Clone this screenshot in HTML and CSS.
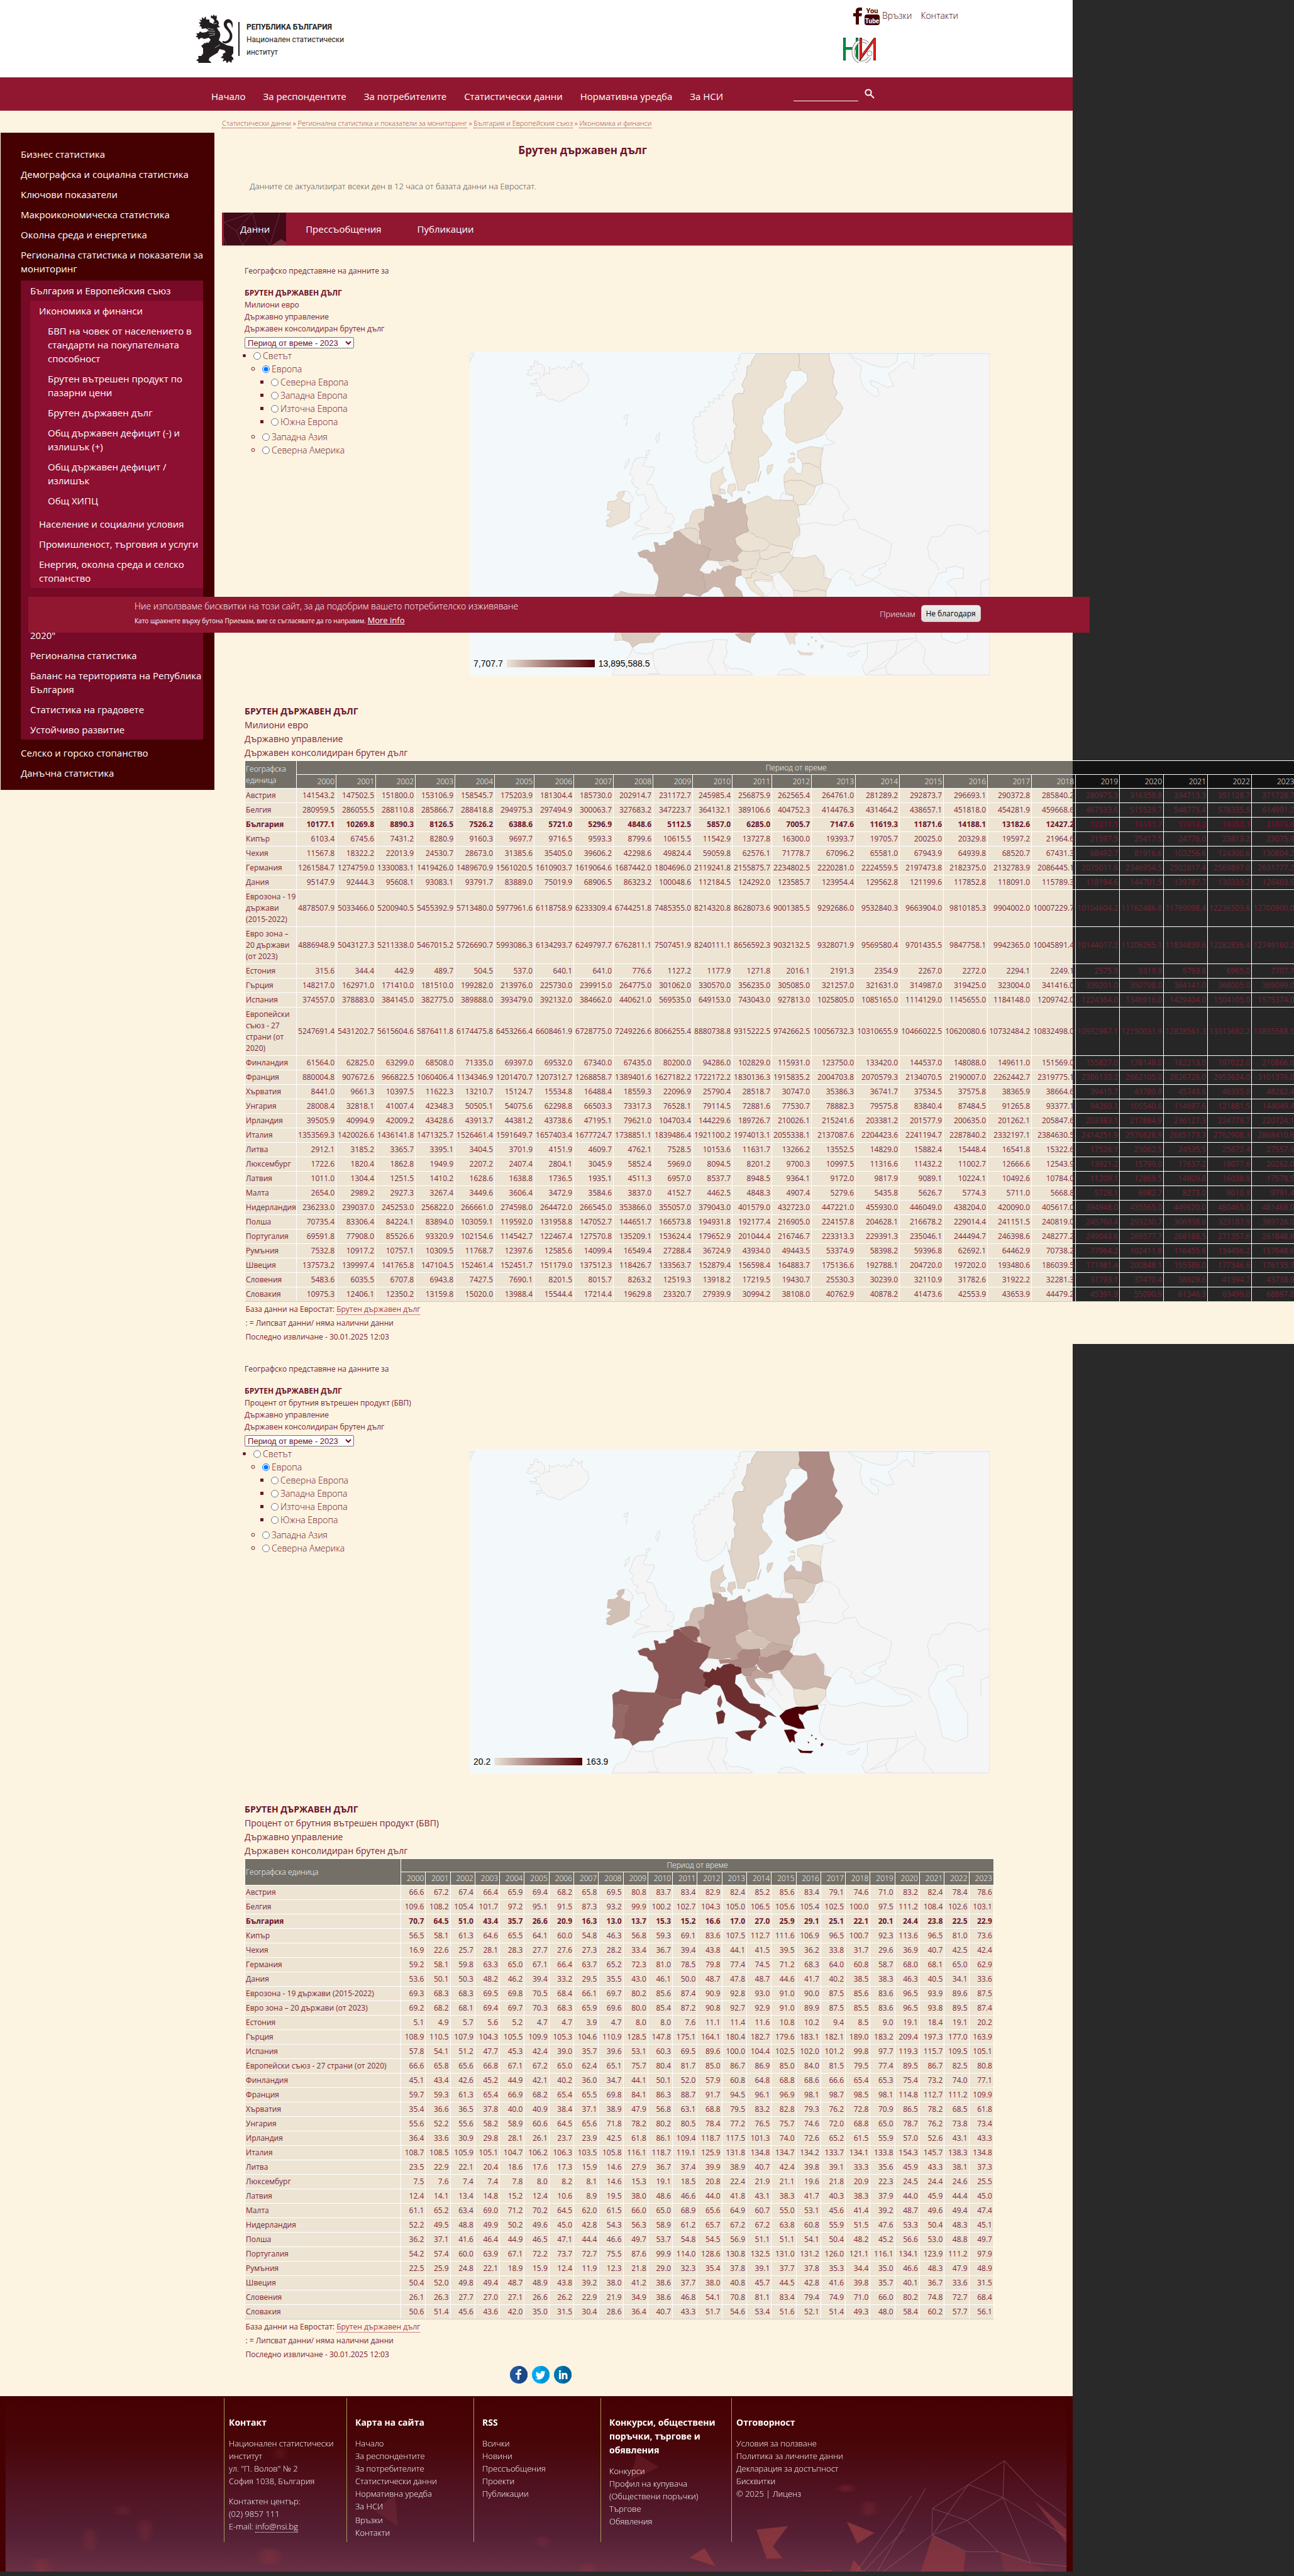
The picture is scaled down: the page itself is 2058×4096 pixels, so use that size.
FILE: index.html
```html
<!DOCTYPE html>
<html lang="bg">
<head>
<meta charset="utf-8">
<title>Брутен държавен дълг | Национален статистически институт</title>
<link rel="stylesheet" href="styles.css">
</head>
<body>
<div class="page">
  <header class="top">
    <a class="brand" href="#">
      <svg class="lion" viewBox="0 0 61 77" aria-hidden="true">
        <path d="M25 5l1-4 2 2 2-3 2 3 2-2 1 4-1 3c4 2 5 6 3 9l3 3-5 1 2 4c3 3 4 6 3 10l-2 6 5 4 8 4 9 2 3 1-1 8-4 6 3 3 2 4-4-1-1 5-4-3-3 4-2-5-5 2 2-5-5-1 4-4-1-2 5-3-2-3-8-2-3 6-7 4-6 4-1 4 4 3-1 4-4-1-2 4-4-4-5 3-1-4-5 1 2-4-4-2 4-3-1-4 5 0 3-4 0-8-3-4 6-5 6 0 3-5-3-3-7 2-5-2-4 3-2-4-3 0 3-3-2-3 4 0 2-3 4 2 6-1 4-3-5-3-6 1-1-4-3 0 2-3-3-3 4-1-3-4 4 1 0-5 3 3 3-4 1 5 5 0 0 4 6 3 2-5-2-3z"/>
        <path d="M44 42c6 3 13-3 11-11-2-6-8-8-9-14-1-6 4-11 9-9 6 2 6 10 4 14 0-5-2-9-5-9-4 0-4 4-1 8 4 5 8 10 6 17-2 7-10 10-15 7z"/>
        <path class="cut" d="M28 12h3M30 15l5-1M20 22l10 2M20 26l12 1M22 30l10 0M23 34l9-2M16 46l8-4M40 48l-8 5"/>
      </svg>
      <span class="rule"></span>
      <span class="brand-text"><strong>РЕПУБЛИКА БЪЛГАРИЯ</strong><span>Национален статистически</span><span>институт</span></span>
    </a>
    <div class="top-right">
      <nav class="top-links" aria-label="Връзки">
        <a href="#" aria-label="Facebook"><svg class="ic-f" viewBox="0 0 14 27" aria-hidden="true"><path d="M4 27V14H0V9h4V6c0-4 2-6 6-6h4v5h-3c-2 0-2 1-2 2v2h5l-1 5H9v13z"/></svg></a>
        <a href="#" aria-label="YouTube"><svg class="ic-yt" viewBox="0 0 24 30" aria-hidden="true"><rect x="0" y="13" width="24" height="17" rx="4"/><text x="12" y="11" text-anchor="middle">You</text><text class="inv" x="12" y="27" text-anchor="middle">Tube</text></svg></a>
        <a href="#">Връзки</a>
        <a class="gap" href="#">Контакти</a>
      </nav>
      <svg class="nsi" viewBox="0 0 52 40" role="img" aria-label="НСИ">
        <g fill="none"><path stroke="#222" stroke-width="4" d="M2 0v36M22 0v34M2 17h20"/><path stroke="#0b8f45" stroke-width="3" d="M2 1v34M22 1v32M2 17h20"/>
        <path stroke="#888" stroke-width="5" d="M39 9a14 17 0 1 0 3 22"/><path stroke="#fff" stroke-width="3" d="M39 9a14 17 0 1 0 3 22"/>
        <path stroke="#222" stroke-width="4" d="M28 0v32L50 2v34"/><path stroke="#e3211c" stroke-width="3" d="M28 1v30L50 3v32"/></g>
        <circle cx="42" cy="25" r="4" fill="#fff" stroke="#888"/>
      </svg>
    </div>
  </header>

  <div class="navbar">
    <nav class="menu" aria-label="Главно меню"><a href="#">Начало</a><a href="#">За респондентите</a><a href="#">За потребителите</a><a href="#">Статистически данни</a><a href="#">Нормативна уредба</a><a href="#">За НСИ</a></nav>
    <form class="search"><input type="text" aria-label="Търсене"><button type="button" aria-label="Търси"><svg viewBox="0 0 16 16" aria-hidden="true"><circle cx="6" cy="6" r="4.6"/><path d="M9.5 9.5L15 15"/></svg></button></form>
  </div>

  <div class="layout">
    <aside class="side">
      <ul>
        <li><a href="#">Бизнес статистика</a></li>
        <li><a href="#">Демографска и социална статистика</a></li>
        <li><a href="#">Ключови показатели</a></li>
        <li><a href="#">Макроикономическа статистика</a></li>
        <li><a href="#">Околна среда и енергетика</a></li>
        <li><a class="two" href="#">Регионална статистика и показатели за<br>мониторинг</a>
          <ul class="l2">
            <li><a href="#">България и Европейския съюз</a>
              <ul class="l3">
                <li><a href="#">Икономика и финанси</a>
                  <ul class="l4">
                    <li><a href="#">БВП на човек от населението в стандарти на покупателната способност</a></li>
                    <li><a href="#">Брутен вътрешен продукт по пазарни цени</a></li>
                    <li><a href="#">Брутен държавен дълг</a></li>
                    <li><a href="#">Общ държавен дефицит (-) и излишък (+)</a></li>
                    <li><a href="#">Общ държавен дефицит / излишък</a></li>
                    <li><a href="#">Общ ХИПЦ</a></li>
                  </ul></li>
                <li><a href="#">Население и социални условия</a></li>
                <li><a class="two" href="#">Промишленост, търговия и услуги</a></li>
                <li><a href="#">Енергия, околна среда и селско стопанство</a></li>
              </ul></li>
            <li><a href="#">Структурни бази данни</a></li>
            <li><a href="#">Показатели на стратегия „Европа<br>2020"</a></li>
            <li><a href="#">Регионална статистика</a></li>
            <li><a class="two" href="#">Баланс на територията на Република<br>България</a></li>
            <li><a href="#">Статистика на градовете</a></li>
            <li><a href="#">Устойчиво развитие</a></li>
          </ul></li>
        <li><a href="#">Селско и горско стопанство</a></li>
        <li><a href="#">Данъчна статистика</a></li>
      </ul>
    </aside>

    <main class="main">
      <div class="crumbs"><a href="#">Статистически данни</a> » <a href="#">Регионална статистика и показатели за мониторинг</a> » <a href="#">България и Европейския съюз</a> » <a href="#">Икономика и финанси</a></div>
      <h1>Брутен държавен дълг</h1>
      <p class="note">Данните се актуализират всеки ден в 12 часа от базата данни на Евростат.</p>
      <nav class="tabs" aria-label="Раздели"><a class="on" href="#"><svg viewBox="0 0 100 53" preserveAspectRatio="none" aria-hidden="true"><path class="tri" d="M76 53l16-10 8 5v5z"/><path d="M0 16l46-16M46 0l6 22 22 31M90 0L74 53M46 0L20 30 30 53M0 16l20 14M52 22L30 53M0 40l4 13"/></svg><span>Данни</span></a><a href="#">Прессъобщения</a><a href="#">Публикации</a></nav>

      <section class="stat" data-set="eur" data-unit="Милиони евро"></section>
      <section class="stat" data-set="gdp" data-unit="Процент от брутния вътрешен продукт (БВП)"></section>

      <div class="share">
        <a href="#" aria-label="Facebook"><svg viewBox="0 0 28 28" aria-hidden="true"><circle cx="14" cy="14" r="14" fill="#22559d"/><path d="M14 0a14 14 0 0 1 0 28z" fill="#1c4684"/><path fill="#fff" d="M12 22v-8H9v-3h3V9c0-3 2-4 4-4h2v3h-1c-1 0-2 0-2 2v1h3v3h-3v8z"/></svg></a>
        <a href="#" aria-label="Twitter"><svg viewBox="0 0 28 28" aria-hidden="true"><circle cx="14" cy="14" r="14" fill="#00aaf0"/><path d="M14 0a14 14 0 0 1 0 28z" fill="#0095d8"/><path fill="#fff" d="M22 9l-2 1 1-2-2 1c-2-2-6-1-5 3-3 0-5-1-7-3-1 2 0 4 1 5l-2-1c0 2 1 3 3 4H7c1 1 2 2 3 2-1 1-3 1-4 1 6 4 14 0 14-9z"/></svg></a>
        <a href="#" aria-label="LinkedIn"><svg viewBox="0 0 28 28" aria-hidden="true"><circle cx="14" cy="14" r="14" fill="#0076ae"/><path d="M14 0a14 14 0 0 1 0 28z" fill="#006397"/><path fill="#fff" d="M8 11h3v10H8zM8 7h3v3H8zM12.500 11h3v1c2-2 6-1 6 3v6h-3v-5c0-3-3-3-3 0v5h-3z"/></svg></a>
      </div>
    </main>
  </div>

  <footer class="foot">
    <svg class="art" viewBox="0 159 1553 954" preserveAspectRatio="none" aria-hidden="true">
      <g class="blur"><ellipse cx="390" cy="1030" rx="14" ry="45"/><ellipse cx="60" cy="1090" rx="10" ry="50"/><ellipse cx="178" cy="780" rx="6" ry="28"/><ellipse cx="210" cy="890" rx="7" ry="60"/><ellipse cx="785" cy="950" rx="7" ry="28"/><ellipse cx="130" cy="940" rx="7" ry="60"/><ellipse cx="405" cy="470" rx="5" ry="30"/><ellipse cx="1258" cy="770" rx="8" ry="40"/><ellipse cx="850" cy="1100" rx="8" ry="30"/><ellipse cx="1225" cy="660" rx="10" ry="20"/></g>
      <g class="shard"><path d="M922 470l32 75-42 72z" opacity=".35"/><path d="M572 690l4 178-34-85z" opacity=".35"/><path d="M1095 885l46-20-22 110 14 65-23 4z"/><path d="M1226 842l40 60-25 60z"/><path d="M1020 985l16 100-38-48z"/><path d="M1236 1050l14 62h-20z"/><path d="M1162 1107l44-4-4 10h-38z"/><path d="M1350 915l48 90-3 108h-62z" opacity=".8"/><path d="M1497 725l47 160v75z" opacity=".8"/><path d="M1448 1005l60 85 5 23h-60z" opacity=".4"/></g>
      <path class="wire" d="M1454 510l-52 130-52 275M1454 510l-2 200-52 125-50-65M1400 835l-50 80M1400 835l45 170M1402 640l50 70 90 210M1350 915l50 90h45M1452 710l40 350M1445 1005l47 60 52 20M1402 640l-52 130M1350 770l-1 145-70 198M1340 660l-70 453M1320 700l-80 413M1310 880l-60 233M1454 510l45 180 45 120"/>
      <path class="edge" d="M0 159h8v954H0zM1544 159h9v954h-9z"/>
    </svg>
    <div class="col first"><h2>Контакт</h2><p>Национален статистически институт<br>ул. "П. Волов" № 2<br>София 1038, България</p><p class="sp">Контактен център:<br>(02) 9857 111<br>E-mail: <a class="mail" href="#">info@nsi.bg</a></p></div>
    <div class="col"><h2>Карта на сайта</h2><a href="#">Начало</a><a href="#">За респондентите</a><a href="#">За потребителите</a><a href="#">Статистически данни</a><a href="#">Нормативна уредба</a><a href="#">За НСИ</a><a class="nudge" href="#">Връзки</a><a href="#">Контакти</a></div>
    <div class="col"><h2>RSS</h2><a href="#">Всички</a><a href="#">Новини</a><a href="#">Прессъобщения</a><a href="#">Проекти</a><a href="#">Публикации</a></div>
    <div class="col wide"><h2>Конкурси, обществени поръчки, търгове и обявления</h2><a href="#">Конкурси</a><a href="#">Профил на купувача (Обществени поръчки)</a><a href="#">Търгове</a><a href="#">Обявления</a></div>
    <div class="col last"><h2>Отговорност</h2><a href="#">Условия за ползване</a><a href="#">Политика за личните данни</a><a href="#">Декларация за достъпност</a><a href="#">Бисквитки</a><a href="#">© 2025 | Лиценз</a></div>
  </footer>
</div>

<div class="cookie" role="dialog" aria-label="Бисквитки">
  <div><p class="c1">Ние използваме бисквитки на този сайт, за да подобрим вашето потребителско изживяване</p>
  <p class="c2">Като щракнете върху бутона Приемам, вие се съгласявате да го направим. <a href="#">More info</a></p></div>
  <div class="acts"><button type="button" class="ok">Приемам</button><button type="button" class="no">Не благодаря</button></div>
</div>
<script src="script.js"></script>
</body>
</html>
```
FILE: styles.css
```css
* { box-sizing: border-box; }
body { margin: 0; background: #292929; color: #6b132b; font: 400 13px/20px "Open Sans", "Noto Sans", sans-serif; }
a { color: inherit; text-decoration: none; }
ul, p, h1, h2, h3 { margin: 0; padding: 0; }
.page { width: 82.9%; background: #fdf3e1; margin-bottom: 8px; }

.top { display: flex; height: 123px; background: #fff; padding: 0 182px 0 310px; color: #450002; }
.brand { display: flex; align-items: flex-start; color: #231f20; }
.lion { width: 61px; height: 77px; margin-top: 23px; }
.lion path { fill: #231f20; }
.lion .cut { fill: none; stroke: #aaa; stroke-width: 1; }
.rule { width: 2px; height: 54px; margin: 35px 11px 0 8px; background: #231f20; }
.brand-text { display: flex; flex-direction: column; margin-top: 33px; font: 400 12px/20px Roboto, "Liberation Sans", sans-serif; }
.brand-text strong { font-weight: 700; }
.top-right { margin-left: auto; width: 183px; }
.top-links { display: flex; align-items: center; gap: 4px; height: 50px; padding-left: 16px; font-size: 14px; font-weight: 300; }
.top-links svg { display: block; fill: #450002; }
.top-links .gap { margin-left: 10px; }
.ic-f { width: 14px; height: 27px; }
.ic-yt { width: 24px; height: 30px; }
.ic-yt text { font: 700 11px/1 Roboto, sans-serif; }
.ic-yt .inv { fill: #fff; font-size: 10px; }
.nsi { display: block; width: 52px; height: 40px; margin-top: 10px; }

.navbar { display: flex; align-items: center; height: 53px; background: #911731; color: #fff; padding: 0 315px 0 336px; }
.menu { display: flex; gap: 28px; padding-top: 6px; font-size: 15px; white-space: nowrap; }
.search { display: flex; align-items: flex-start; gap: 10px; margin: 0 0 0 auto; padding-top: 1px; }
.search input { width: 103px; height: 22px; border: 0; border-bottom: 1px solid #fff; background: none; color: #fff; }
.search button { border: 0; padding: 2px 0 0; background: none; }
.search svg { display: block; width: 16px; height: 16px; fill: none; stroke: #fff; stroke-width: 2; }

.layout { display: flex; align-items: flex-start; }
.side { flex: 0 0 339px; margin: 35px 12px 0 1px; padding: 18px 18px 11px 32px; background: #450002; color: #fff; font-size: 15px; line-height: 22px; }
.side ul { list-style: none; }
.side a { display: block; padding: 5px 0; }
.side .two { white-space: nowrap; }
.side .l2 { margin: 3px 0 5px; background: #770a26; }
.side .l3, .side .l4 { margin-bottom: 5px; }
.side .l3 { margin-left: 15px; background: #8d0f31; }
.side .l2 > li > a { padding-left: 15px; }
.side .l3 > li > a { padding-left: 14px; }
.side .l4 > li > a { padding-left: 28px; }

.main { flex: 1; min-width: 0; padding-top: 10px; }
.crumbs { font-size: 11px; font-weight: 300; }
.crumbs a, .link { color: #a23d4d; border-bottom: 1px dotted #911731; }
h1 { margin: 21px 206px 0 0; font-size: 17px; line-height: 24px; font-weight: 700; text-align: center; }
.note { margin: 35px 0 32px 44px; color: #444; font-weight: 300; }
.tabs { display: flex; height: 53px; padding-left: 3px; background: #911731; border-bottom: 1px solid #c98a97; color: #fff; font-size: 15px; }
.tabs a { display: flex; align-items: center; position: relative; padding: 0 26px 0 31px; }
.tabs .on { padding: 0 26px; background: #430a18; }
.tabs .on span { position: relative; }
.tabs svg { position: absolute; left: 0; top: 0; width: 100%; height: 100%; fill: none; stroke: #6d2f40; }
.tabs .tri { fill: #7a2f3c; stroke: none; }

.stat { padding: 30px 0 0 36px; line-height: 19px; font-size: 12px; color: #7a2438; }
.lead { margin-bottom: 16px; }
.stat strong { color: #6b132b; font-weight: 700; }
.meta { font-size: 12px; }
.geo { display: grid; grid-template-columns: 358px minmax(0, 827px); margin-top: 4px; }
.geo select { display: block; width: 174px; height: 18px; padding: 0; border: 1px solid #767676; border-radius: 2px; background: #fff; color: #6b132b; font: 13px/16px "Liberation Sans", sans-serif; }
.geo ul { padding-left: 14px; color: #6b132b; font-size: 14px; font-weight: 300; line-height: 21px; }
.geo > div > ul { margin-top: 1px; }
.geo ul ul { margin-bottom: 3px; }
.geo input { width: 12px; height: 12px; margin: 0 3px 0 0; vertical-align: -1px; }
.map { position: relative; margin-top: 23px; height: 516px; background: #f3f8fa; }
.map svg { display: block; width: 100%; height: 100%; }
.map path { fill: #f5f5f5; stroke: #dddddd; stroke-width: 1; vector-effect: non-scaling-stroke; stroke-linejoin: round; }
.map .sea { fill: #f3f8fa; }
.map .line { fill: none; }
.map .eu { stroke: rgba(120, 80, 60, .2); }
.legend { position: absolute; left: 6px; bottom: 9px; display: flex; align-items: center; gap: 6px; color: #000; font: 14px/22px "Liberation Sans", sans-serif; }
.legend i { width: 140px; height: 12px; background: linear-gradient(to right, #ede5d7, #4d0006); }
.heads { margin: 45px 0 1px; font-size: 14px; line-height: 22px; }

table { border-collapse: collapse; table-layout: fixed; font-size: 12px; line-height: 18px; }
.t-eur { width: 1671px; }
.t-eur .c0 { width: 82px; }
.t-eur .c1 { width: 63px; }
.t-eur .c2 { width: 70px; }
.t-gdp { width: 90.5%; }
.t-gdp .c0 { width: 248px; }
th, td { padding: 2px; border: 1px solid #fff; text-align: right; font-weight: 400; background: rgba(0, 0, 0, .06); }
tbody th, .geo-h { padding-right: 0; padding-left: 1px; text-align: left; }
thead th { padding-bottom: 1px; background: rgba(0, 0, 0, .54); color: #fff; font-weight: 300; }
.t-gdp thead th { padding-top: 1px; }
thead .period { text-align: center; }
tbody tr:last-child > * { border-bottom-color: #ccc; }
.bg > * { color: #6b132b; font-weight: 700; }
tfoot td { border: 0; padding: 1px 1px 0; background: #fdf3e1; text-align: left; line-height: 22px; }
.share { display: flex; gap: 7px; margin: 7px 0 20px 458px; }
.share svg { display: block; width: 28px; height: 28px; }

.foot { position: relative; display: flex; height: 279px; padding: 3px 0 0 356px; color: #fff; font-weight: 300; line-height: 20px; background: linear-gradient(#450002 0%, #480508 25%, #501322 55%, #552035 80%, #6a3045 100%); }
.art { position: absolute; left: 0; top: 0; width: 100%; height: 100%; }
.shard { fill: #963c41; opacity: .75; }
.blur { fill: #a03a3c; opacity: .3; filter: blur(6px); }
.wire { fill: none; stroke: #a0707a; stroke-width: 1; opacity: .5; vector-effect: non-scaling-stroke; }
.edge { fill: #450002; }
.col { position: relative; width: 202px; height: 229px; padding: 28px 20px 0 13px; border-left: 1px solid #a89c58; }
.first { width: 195px; padding: 28px 12px 0 7px; }
.wide { width: 208px; }
.last { width: 220px; padding-left: 7px; }
.col h2 { margin-bottom: 12px; font-size: 14px; line-height: 22px; font-weight: 700; }
.col a { display: block; }
.col .nudge { margin-top: 2px; }
.col .sp { margin-top: 12px; }
.col .mail { display: inline; border-bottom: 1px dotted #fff; }

.cookie { position: absolute; top: 949px; left: 45px; width: 82%; height: 57px; display: flex; justify-content: space-between; padding: 4px 173px 0 169px; background: #911731; color: #fff; }
.c1 { font-size: 14px; font-weight: 300; line-height: 22px; }
.c2 { font-size: 10px; line-height: 22px; }
.c2 a { font-size: 13px; text-decoration: underline; }
.acts { display: flex; align-items: flex-start; gap: 9px; padding-top: 9px; }
.acts button { height: 27px; font: 300 13px/20px "Open Sans", sans-serif; border: 0; background: none; color: #fff; padding: 0; }
.acts .no { width: 95px; border-radius: 5px; border: 1px solid #ccc; background: linear-gradient(#eee, #ddd); color: #000; font-weight: 400; font-size: 12px; }
```
FILE: script.js
```js
const names = {
  AT: 'Австрия', BE: 'Белгия', BG: 'България', CY: 'Кипър', CZ: 'Чехия', DE: 'Германия', DK: 'Дания',
  E19: 'Еврозона\u00a0-\u00a019 държави (2015-2022)', E20: 'Евро зона – 20 държави (от 2023)', EE: 'Естония', EL: 'Гърция', ES: 'Испания',
  EU: 'Европейски съюз - 27 страни (от 2020)', FI: 'Финландия', FR: 'Франция', HR: 'Хърватия', HU: 'Унгария', IE: 'Ирландия',
  IT: 'Италия', LT: 'Литва', LU: 'Люксембург', LV: 'Латвия', MT: 'Малта', NL: 'Нидерландия', PL: 'Полша', PT: 'Португалия',
  RO: 'Румъния', SE: 'Швеция', SI: 'Словения', SK: 'Словакия'
};

const eur = {
AT: '141543.2 147502.5 151800.0 153106.9 158545.7 175203.9 181304.4 185730.0 202914.7 231172.7 245985.4 256875.9 262565.4 264761.0 281289.2 292873.7 296693.1 290372.8 285840.2 280975.3 316359.8 334713.3 351128.7 371728.7',
BE: '280959.5 286055.5 288110.8 285866.7 288418.8 294975.3 297494.9 300063.7 327683.2 347223.7 364132.1 389106.6 404752.3 414476.3 431464.2 438657.1 451818.0 454281.9 459668.6 467533.6 515529.7 548775.4 578335.9 614991.2',
BG: '10177.1 10269.8 8890.3 8126.5 7526.2 6388.6 5721.0 5296.9 4848.6 5112.5 5857.0 6285.0 7005.7 7147.6 11619.3 11871.6 14188.1 13182.6 12427.2 12311.1 15131.7 17013.2 19353.1 21673.6',
CY: '6103.4 6745.6 7431.2 8280.9 9160.3 9697.7 9716.5 9593.3 8799.6 10615.5 11542.9 13727.8 16300.0 19393.7 19705.7 20025.0 20329.8 19597.2 21964.6 21597.5 25417.5 24776.0 23813.2 23075.9',
CZ: '11567.8 18322.2 22013.9 24530.7 28673.0 31385.6 35405.0 39606.2 42298.6 49824.4 59059.8 62576.1 71778.7 67096.2 65581.0 67943.9 64939.8 68520.7 67431.3 68492.7 81916.6 103256.6 124300.6 130804.2',
DE: '1261584.7 1274759.0 1330083.1 1419426.0 1489670.9 1561020.5 1610903.7 1619064.6 1687442.0 1804696.0 2119241.8 2155875.7 2234802.5 2220281.0 2224559.5 2197473.8 2182375.0 2132783.9 2086445.1 2075011.6 2346954.5 2502817.4 2569897.0 2631777.2',
DK: '95147.9 92444.3 95608.1 93083.1 93791.7 83889.0 75019.9 68906.5 86323.2 100048.6 112184.5 124292.0 123585.7 123954.4 129562.8 121199.6 117852.8 118091.0 115789.3 118194.6 144701.5 139787.7 130333.2 126403.6',
E19: '4878507.9 5033466.0 5200940.5 5455392.9 5713480.0 5977961.6 6118758.9 6233309.4 6744251.8 7485355.0 8214320.8 8628073.6 9001385.5 9292686.0 9532840.3 9663904.0 9810185.3 9904002.0 10007229.7 10104604.2 11162486.8 11789098.4 12236503.6 12700900.0',
E20: '4886948.9 5043127.3 5211338.0 5467015.2 5726690.7 5993086.3 6134293.7 6249797.7 6762811.1 7507451.9 8240111.1 8656592.3 9032132.5 9328071.9 9569580.4 9701435.5 9847758.1 9942365.0 10045891.4 10144017.2 11206265.1 11834839.6 12282836.4 12749160.2',
EE: '315.6 344.4 442.9 489.7 504.5 537.0 640.1 641.0 776.6 1127.2 1177.9 1271.8 2016.1 2191.3 2354.9 2267.0 2272.0 2294.1 2249.1 2575.9 5319.9 5793.8 6965.0 7707.7',
EL: '148217.0 162971.0 171410.0 181510.0 199282.0 213976.0 225730.0 239915.0 264775.0 301062.0 330570.0 356235.0 305085.0 321257.0 321631.0 314987.0 319425.0 323004.0 341416.0 339201.0 350798.0 364141.0 368005.0 369099.0',
ES: '374557.0 378883.0 384145.0 382775.0 389888.0 393479.0 392132.0 384662.0 440621.0 569535.0 649153.0 743043.0 927813.0 1025805.0 1085165.0 1114129.0 1145655.0 1184148.0 1209742.0 1224364.0 1346916.0 1429404.0 1504105.0 1575374.0',
EU: '5247691.4 5431202.7 5615604.6 5876411.8 6174475.8 6453266.4 6608461.9 6728775.0 7249226.6 8066255.4 8880738.8 9315222.5 9742662.5 10056732.3 10310655.9 10466022.5 10620080.6 10732484.2 10832498.0 10932967.1 12150031.9 12828561.3 13313682.2 13895588.5',
FI: '61564.0 62825.0 63299.0 68508.0 71335.0 69397.0 69532.0 67340.0 67435.0 80200.0 94286.0 102829.0 115931.0 123750.0 133420.0 144537.0 148088.0 149611.0 151569.0 155827.0 178148.0 182213.0 197022.0 210866.0',
FR: '880004.8 907672.6 966822.5 1060406.4 1134346.9 1201470.7 1207312.7 1268858.7 1389401.6 1627182.2 1722172.2 1830136.3 1915835.2 2004703.8 2070579.3 2134070.5 2190007.0 2262442.7 2319775.1 2386133.2 2662105.0 2826726.0 2953624.0 3101376.0',
HR: '8441.0 9661.3 10397.5 11622.3 13210.7 15124.7 15534.8 16488.4 18559.3 22096.9 25790.4 28518.7 30747.0 35386.3 36741.7 37534.5 37575.8 38365.9 38664.6 39415.7 43780.8 45743.6 46335.0 48262.4',
HU: '28008.4 32818.1 41007.4 42348.3 50505.1 54075.6 62298.8 66503.3 73317.3 76528.1 79114.5 72881.6 77530.7 78882.3 79575.8 83840.4 87484.5 91265.8 93377.1 94260.1 105540.6 114697.6 121881.5 144049.4',
IE: '39505.9 40994.9 42009.2 43428.6 43913.7 44381.2 43738.6 47195.1 79621.0 104703.4 144229.6 189726.7 210026.1 215241.6 203381.2 201577.9 200635.0 201262.1 205847.6 203383.1 217884.9 236127.3 224779.7 220724.1',
IT: '1353569.3 1420026.6 1436141.8 1471325.7 1526461.4 1591649.7 1657403.4 1677724.7 1738851.1 1839486.4 1921100.2 1974013.1 2055338.1 2137087.6 2204423.6 2241194.7 2287840.2 2332197.1 2384630.5 2414251.9 2576628.9 2685173.3 2762908.3 2868410.6',
LT: '2912.1 3185.2 3365.7 3395.1 3404.5 3701.9 4151.9 4609.7 4762.1 7528.5 10153.6 11631.7 13266.2 13552.5 14829.0 15882.4 15448.4 16541.8 15322.6 17526.1 23062.5 24535.5 25672.4 27557.9',
LU: '1722.6 1820.4 1862.8 1949.9 2207.2 2407.4 2804.1 3045.9 5852.4 5969.0 8094.5 8201.2 9700.3 10997.5 11316.6 11432.2 11002.7 12666.6 12543.9 13921.2 15799.0 17637.2 19077.6 20262.0',
LV: '1011.0 1304.4 1251.5 1410.2 1628.6 1638.8 1736.5 1935.1 4511.3 6957.0 8537.7 8948.5 9364.1 9172.0 9817.9 9089.1 10224.1 10492.6 10784.0 11209.1 12869.5 14809.8 16038.9 17578.5',
MT: '2654.0 2989.2 2927.3 3267.4 3449.6 3606.4 3472.9 3584.6 3837.0 4152.7 4462.5 4848.3 4907.4 5279.6 5435.8 5626.7 5774.3 5711.0 5668.8 5728.1 6982.7 8273.0 9010.9 9791.4',
NL: '236233.0 239037.0 245253.0 256822.0 266661.0 274598.0 264472.0 266545.0 353866.0 355057.0 379043.0 401579.0 432723.0 447221.0 455930.0 446049.0 438204.0 420090.0 405617.0 394948.0 435565.0 449620.0 480465.0 481468.0',
PL: '70735.4 83306.4 84224.1 83894.0 103059.1 119592.0 131958.8 147052.7 144651.7 166573.8 194931.8 192177.4 216905.0 224157.8 204628.1 216678.2 229014.4 241151.5 240819.0 245760.4 293230.7 306938.6 323187.9 389726.0',
PT: '69591.8 77908.0 85526.6 93320.9 102154.6 114542.7 122467.4 127570.8 135209.1 153624.4 179652.9 201044.4 216746.7 223313.3 229391.3 235046.1 244494.7 246398.6 248277.2 249043.6 269577.7 268188.5 271357.6 261848.8',
RO: '7532.8 10917.2 10757.1 10309.5 11768.7 12397.6 12585.6 14099.4 16549.4 27288.4 36724.9 43934.0 49443.5 53374.9 58398.2 59396.8 62692.1 64462.9 70738.2 77964.2 102411.8 116455.6 134456.2 157648.6',
SE: '137573.2 139997.4 141765.8 147104.5 152461.4 152451.7 151179.0 137512.3 118426.7 133563.7 152879.4 156598.4 164883.7 175136.6 192788.1 204720.0 197202.0 193480.6 186039.5 171981.4 200848.1 195586.0 177346.6 176135.3',
SI: '5483.6 6035.5 6707.8 6943.8 7427.5 7690.1 8201.5 8015.7 8263.2 12519.3 13918.2 17219.5 19430.7 25530.3 30239.0 32110.9 31782.6 31922.2 32281.3 31793.1 37470.4 38929.6 41394.7 43738.9',
SK: '10975.3 12406.1 12350.2 13159.8 15020.0 13988.4 15544.4 17214.4 19629.8 23320.7 27939.9 30994.2 38108.0 40762.9 40878.2 41473.6 42553.9 43653.9 44479.2 45391.9 55090.9 61346.3 63499.0 68897.8'
};

const gdp = {
AT: '66.6 67.2 67.4 66.4 65.9 69.4 68.2 65.8 69.5 80.8 83.7 83.4 82.9 82.4 85.2 85.6 83.4 79.1 74.6 71.0 83.2 82.4 78.4 78.6',
BE: '109.6 108.2 105.4 101.7 97.2 95.1 91.5 87.3 93.2 99.9 100.2 102.7 104.3 105.0 106.5 105.6 105.4 102.5 100.0 97.5 111.2 108.4 102.6 103.1',
BG: '70.7 64.5 51.0 43.4 35.7 26.6 20.9 16.3 13.0 13.7 15.3 15.2 16.6 17.0 27.0 25.9 29.1 25.1 22.1 20.1 24.4 23.8 22.5 22.9',
CY: '56.5 58.1 61.3 64.6 65.5 64.1 60.0 54.8 46.3 56.8 59.3 69.1 83.6 107.5 112.7 111.6 106.9 96.5 100.7 92.3 113.6 96.5 81.0 73.6',
CZ: '16.9 22.6 25.7 28.1 28.3 27.7 27.6 27.3 28.2 33.4 36.7 39.4 43.8 44.1 41.5 39.5 36.2 33.8 31.7 29.6 36.9 40.7 42.5 42.4',
DE: '59.2 58.1 59.8 63.3 65.0 67.1 66.4 63.7 65.2 72.3 81.0 78.5 79.8 77.4 74.5 71.2 68.3 64.0 60.8 58.7 68.0 68.1 65.0 62.9',
DK: '53.6 50.1 50.3 48.2 46.2 39.4 33.2 29.5 35.5 43.0 46.1 50.0 48.7 47.8 48.7 44.6 41.7 40.2 38.5 38.3 46.3 40.5 34.1 33.6',
E19: '69.3 68.3 68.3 69.5 69.8 70.5 68.4 66.1 69.7 80.2 85.6 87.4 90.9 92.8 93.0 91.0 90.0 87.5 85.6 83.6 96.5 93.9 89.6 87.5',
E20: '69.2 68.2 68.1 69.4 69.7 70.3 68.3 65.9 69.6 80.0 85.4 87.2 90.8 92.7 92.9 91.0 89.9 87.5 85.5 83.6 96.5 93.8 89.5 87.4',
EE: '5.1 4.9 5.7 5.6 5.2 4.7 4.7 3.9 4.7 8.0 8.0 7.6 11.1 11.4 11.6 10.8 10.2 9.4 8.5 9.0 19.1 18.4 19.1 20.2',
EL: '108.9 110.5 107.9 104.3 105.5 109.9 105.3 104.6 110.9 128.5 147.8 175.1 164.1 180.4 182.7 179.6 183.1 182.1 189.0 183.2 209.4 197.3 177.0 163.9',
ES: '57.8 54.1 51.2 47.7 45.3 42.4 39.0 35.7 39.6 53.1 60.3 69.5 89.6 100.0 104.4 102.5 102.0 101.2 99.8 97.7 119.3 115.7 109.5 105.1',
EU: '66.6 65.8 65.6 66.8 67.1 67.2 65.0 62.4 65.1 75.7 80.4 81.7 85.0 86.7 86.9 85.0 84.0 81.5 79.5 77.4 89.5 86.7 82.5 80.8',
FI: '45.1 43.4 42.6 45.2 44.9 42.1 40.2 36.0 34.7 44.1 50.1 52.0 57.9 60.8 64.8 68.8 68.6 66.6 65.4 65.3 75.4 73.2 74.0 77.1',
FR: '59.7 59.3 61.3 65.4 66.9 68.2 65.4 65.5 69.8 84.1 86.3 88.7 91.7 94.5 96.1 96.9 98.1 98.7 98.5 98.1 114.8 112.7 111.2 109.9',
HR: '35.4 36.6 36.5 37.8 40.0 40.9 38.4 37.1 38.9 47.9 56.8 63.1 68.8 79.5 83.2 82.8 79.3 76.2 72.8 70.9 86.5 78.2 68.5 61.8',
HU: '55.6 52.2 55.6 58.2 58.9 60.6 64.5 65.6 71.8 78.2 80.2 80.5 78.4 77.2 76.5 75.7 74.6 72.0 68.8 65.0 78.7 76.2 73.8 73.4',
IE: '36.4 33.6 30.9 29.8 28.1 26.1 23.7 23.9 42.5 61.8 86.1 109.4 118.7 117.5 101.3 74.0 72.6 65.2 61.5 55.9 57.0 52.6 43.1 43.3',
IT: '108.7 108.5 105.9 105.1 104.7 106.2 106.3 103.5 105.8 116.1 118.7 119.1 125.9 131.8 134.8 134.7 134.2 133.7 134.1 133.8 154.3 145.7 138.3 134.8',
LT: '23.5 22.9 22.1 20.4 18.6 17.6 17.3 15.9 14.6 27.9 36.7 37.4 39.9 38.9 40.7 42.4 39.8 39.1 33.3 35.6 45.9 43.3 38.1 37.3',
LU: '7.5 7.6 7.4 7.4 7.8 8.0 8.2 8.1 14.6 15.3 19.1 18.5 20.8 22.4 21.9 21.1 19.6 21.8 20.9 22.3 24.5 24.4 24.6 25.5',
LV: '12.4 14.1 13.4 14.8 15.2 12.4 10.6 8.9 19.5 38.0 48.6 46.6 44.0 41.8 43.1 38.3 41.7 40.3 38.3 37.9 44.0 45.9 44.4 45.0',
MT: '61.1 65.2 63.4 69.0 71.2 70.2 64.5 62.0 61.5 66.0 65.0 68.9 65.6 64.9 60.7 55.0 53.1 45.6 41.4 39.2 48.7 49.6 49.4 47.4',
NL: '52.2 49.5 48.8 49.9 50.2 49.6 45.0 42.8 54.3 56.3 58.9 61.2 65.7 67.2 67.2 63.8 60.8 55.9 51.5 47.6 53.3 50.4 48.3 45.1',
PL: '36.2 37.1 41.6 46.4 44.9 46.5 47.1 44.4 46.6 49.7 53.7 54.8 54.5 56.9 51.1 51.1 54.1 50.4 48.2 45.2 56.6 53.0 48.8 49.7',
PT: '54.2 57.4 60.0 63.9 67.1 72.2 73.7 72.7 75.5 87.6 99.9 114.0 128.6 130.8 132.5 131.0 131.2 126.0 121.1 116.1 134.1 123.9 111.2 97.9',
RO: '22.5 25.9 24.8 22.1 18.9 15.9 12.4 11.9 12.3 21.8 29.0 32.3 35.4 37.8 39.1 37.7 37.8 35.3 34.4 35.0 46.6 48.3 47.9 48.9',
SE: '50.4 52.0 49.8 49.4 48.7 48.9 43.8 39.2 38.0 41.2 38.6 37.7 38.0 40.8 45.7 44.5 42.8 41.6 39.8 35.7 40.1 36.7 33.6 31.5',
SI: '26.1 26.3 27.7 27.0 27.1 26.6 26.2 22.9 21.9 34.9 38.6 46.8 54.1 70.8 81.1 83.4 79.4 74.9 71.0 66.0 80.2 74.8 72.7 68.4',
SK: '50.6 51.4 45.6 43.6 42.0 35.0 31.5 30.4 28.6 36.4 40.7 43.3 51.7 54.6 53.4 51.6 52.1 51.4 49.3 48.0 58.4 60.2 57.7 56.1'
};

// Outlines of land without data, seas cut into it, and border lines.
const land = [
  'M217,125 225,128 222,140 232,138 239,152 241,172 236,190 246,178 252,182 251,150 257,160 265,158 272,148 280,158 286,150 292,165 297,150 305,155 303,140 308,122 314,135 322,142 318,150 330,133 326,152 330,165 342,182 345,210 338,235 325,255 305,268 290,288 275,302 262,292 248,288 240,270 228,272 221,280 222,262 235,262 230,248 226,232 212,230 204,221 222,222 220,208 214,206 230,200 232,190 222,175 214,182 208,190 197,184 203,175 200,165 210,162 206,148 214,150Z',
  'M707,93 700,100 704,115 697,112 700,135 690,145 695,165 684,175 690,205 680,210 678,225 670,240 660,260 665,275 650,270 655,290 640,285 640,305 628,300 630,320 618,325 622,342 605,345 608,365 595,365 592,385 588,395 595,410 590,430 596,440 592,460 600,470 595,490 602,500 597,520 602,545 612,560 625,565 640,550 655,530 665,510 668,480 674,510 680,525 683,470 690,460 688,425 694,405 686,385 688,350 684,300 690,272 697,265 710,265 712,245 706,230 712,205 717,190 719,148 728,145 730,125 742,93Z',
  'M455,545 465,540 483,540 478,555 472,575 480,580 498,580 500,592 492,620 480,655 495,658 503,690 508,720 520,745 528,755 525,780 538,780 547,800 543,825 530,840 543,845 535,862 515,868 490,868 475,872 460,880 450,895 448,888 460,862 475,850 488,845 470,838 455,830 453,822 470,805 465,785 480,770 487,755 480,735 478,712 475,698 460,705 455,690 462,672 452,665 445,640 452,625 440,610 445,590 448,570Z',
  'M430,684 440,690 450,715 445,735 432,738 425,725 418,722Z', 'M507,440 513,434 510,460 507,480 502,460Z', 'M430,360 438,355 434,378 427,370Z', 'M433,404l2,-20z', 'M432,560 441,545 438,570 429,590Z', 'M480,515 489,507 486,525 480,535Z', 'M63,132 68,112 74,93 63,93Z',
  'M912,93 915,130 925,170 920,215 932,262 925,285 945,327 938,358 915,400 892,448 905,437 908,462 927,476 912,485 898,490 898,505 892,585 898,650 868,740 838,745 843,790 843,870 825,960 828,970 803,1030 778,1050 735,1070 738,1085 755,1120 785,1165 800,1200 835,1240 860,1190 905,1180 895,1230 890,1270 890,1300 905,1330 930,1335 940,1350 970,1355 980,1345 1003,1338 1003,1400 990,1440 998,1475 1292,1475 1292,93Z',
  'M400,1475 408,1440 430,1425 440,1390 448,1362 455,1380 480,1385 495,1380 505,1365 525,1362 545,1345 580,1335 620,1332 645,1322 672,1325 668,1355 672,1380 662,1420 680,1448 700,1448 725,1462 732,1475Z',
  'M790,1475 800,1455 820,1448 855,1475Z', 'M955,1385 972,1378 985,1370 975,1388 962,1398Z', 'M795,722 803,690 810,700 828,705 828,725Z', 'M619,988 638,980 652,988 655,1000 663,1010 655,1025 648,1018 645,1035 637,1025 630,1042 615,1035 606,1030 612,1005Z'
];
const seas = [
  'M958,93 975,130 990,150 985,190 992,235 1010,265 1022,280 1030,270 1028,245 1012,230 1010,208 1030,220 1050,240 1065,232 1058,205 1053,180 1070,160 1085,135 1098,128 1112,160 1115,93 1075,93 1072,130 1055,150 1035,152 1010,140 985,120 972,112 962,93Z',
  'M918,1062 925,1045 935,1025 945,1020 955,1030 968,1042 960,1060 972,1070 975,1092 1000,1082 1015,1068 1035,1085 1060,1110 1075,1135 1100,1142 1110,1165 1085,1185 1040,1190 990,1172 950,1190 915,1180 905,1160 905,1115 912,1085Z',
  'M990,1045 1005,1020 1025,1005 1045,993 1047,1005 1030,1020 1035,1040 1020,1060 1010,1062 995,1050Z',
  'M1170,1040 1190,1030 1190,1015 1212,1008 1230,1018 1230,1058 1205,1062 1190,1078 1210,1110 1215,1150 1240,1220 1240,1320 1212,1340 1180,1320 1175,1270 1165,1200 1150,1150 1148,1110 1160,1080Z'
];
const lines = [
  'M898,650 915,655 935,680 938,710 950,735 960,762 945,785 948,812 930,832 900,828 880,820 843,830M948,812 975,805 985,845 1010,865 1040,890 1060,910 1055,970 1045,993M1292,860 1280,855 1265,870 1250,840 1218,828 1195,835 1185,860 1175,880 1155,880 1145,925 1150,975 1165,995 1172,1025',
  'M880,960 900,1000 905,1060M1060,1105 1095,1115 1130,1150M1271,1140 1271,1075 1292,1060M1115,1295 1120,1325 1010,1460 1000,1475M1003,1338 1030,1330 1080,1325 1115,1318M1075,1325 1070,1380 1045,1440 1010,1462M1120,1325 1140,1365 1135,1420 1160,1475M1045,1435 1050,1468 1062,1475M448,1362 443,1380M495,1380 500,1440 510,1470 485,1470M640,1330 635,1370 625,1410 645,1475M662,1420 672,1460M735,1070 778,1075 780,1110 762,1140M778,1050 785,1105 800,1140M1133,93 1137,104 1158,100 1160,93'
];
const shapes = {
  SE: 'M742,93 841,93 843,130 840,150 846,166 835,168 825,165 818,180 815,195 808,210 812,240 805,260 803,280 795,290 785,300 775,320 765,330 760,355 755,365 757,395 752,405 755,430 765,445 770,460 778,480 772,500 765,515 758,530 745,540 748,580 742,620 738,645 718,655 712,682 697,682 694,650 690,620 682,580 678,540 673,515 680,525 683,470 690,460 688,425 694,405 686,385 688,350 684,300 690,272 697,265 710,265 712,245 706,230 712,205 717,190 719,148 728,145 730,125ZM768,575 780,570 775,600 768,614 765,595ZM752,598 745,645 742,640Z',
  FI: 'M841,93 912,93 915,130 925,170 920,215 925,240 932,262 925,285 938,305 945,327 938,358 915,400 903,430 892,448 870,462 850,472 835,480 818,462 810,445 812,420 807,395 808,370 806,345 808,310 822,300 825,275 840,250 855,225 862,210 860,180 848,168 840,150 843,130Z',
  IE: 'M415,690 428,684 428,700 420,720 428,732 442,740 441,770 440,800 428,815 410,828 395,840 386,835 388,820 385,812 398,798 388,790 400,770 388,765 390,730 405,728 415,715 410,705Z',
  DK: 'M664,580 660,600 665,630 670,638 655,660 652,700 637,702 633,670 632,640 636,610 650,600ZM655,675 665,678 668,695 655,697ZM675,658 690,652 692,680 683,688 684,710 672,688ZM720,685 726,690 723,697Z',
  DE: 'M637,700 656,705 660,718 672,722 670,738 690,730 700,715 706,712 708,735 716,745 714,775 720,800 718,830 723,858 705,870 690,885 693,910 708,940 695,965 698,985 688,990 675,980 660,985 650,985 638,983 625,980 628,950 633,935 612,922 610,905 605,880 608,850 603,825 618,810 618,775 620,755 632,748 640,755 642,730 638,720Z',
  NL: 'M620,762 618,775 618,810 603,825 608,850 606,862 598,848 585,845 572,848 572,828 582,818 585,790 592,768 605,762Z',
  BE: 'M558,852 572,846 585,843 598,848 606,862 606,885 600,895 602,912 588,902 575,885 565,870Z',
  LU: 'M602,890 610,895 610,915 602,912Z',
  FR: 'M557,855 565,870 575,885 588,902 598,912 610,917 633,935 628,950 625,980 612,1005 605,1025 615,1035 617,1045 613,1060 620,1075 617,1100 628,1115 615,1125 608,1138 590,1130 575,1123 565,1138 563,1160 540,1158 515,1145 500,1130 505,1110 510,1060 508,1045 500,1030 495,1000 485,988 482,975 465,968 460,950 475,938 485,938 490,948 503,945 500,920 498,905 508,907 510,920 528,915 525,905 545,885 545,862ZM650,1155 656,1140 660,1170 655,1195 648,1180Z',
  IT: 'M617,1040 630,1042 637,1025 645,1035 648,1018 655,1025 663,1010 685,1003 690,1015 705,1020 707,1045 692,1055 690,1090 705,1115 710,1145 725,1175 750,1180 748,1188 775,1215 788,1235 770,1225 760,1240 765,1262 752,1285 745,1280 750,1255 738,1235 715,1215 690,1190 670,1165 663,1130 655,1100 640,1095 628,1112 617,1100 620,1075 613,1060ZM690,1300 710,1293 742,1290 728,1315 727,1338 705,1325ZM645,1215 660,1205 667,1220 663,1260 650,1265Z',
  ES: 'M400,1140 405,1130 415,1125 420,1115 440,1125 470,1128 500,1130 515,1145 540,1158 563,1160 562,1180 535,1200 525,1225 518,1250 522,1265 510,1285 514,1300 505,1310 497,1335 465,1338 448,1358 440,1335 425,1325 422,1300 430,1270 430,1220 440,1185 415,1180 402,1180Z',
  PT: 'M402,1180 415,1180 440,1185 430,1220 430,1270 422,1300 427,1325 405,1328 408,1295 400,1275 402,1230Z',
  AT: 'M652,988 675,985 688,990 698,985 695,965 708,942 725,945 748,940 752,955 750,972 745,980 745,1000 735,1018 715,1025 703,1022 688,1010 675,1003 655,1005Z',
  CZ: 'M690,885 715,862 735,870 740,880 755,880 760,890 775,900 770,920 762,940 745,938 725,945 708,940 693,912Z',
  SK: 'M770,920 775,912 790,920 810,925 825,930 820,950 800,950 790,965 775,970 765,980 750,975 748,945 762,940Z',
  HU: 'M750,975 765,980 775,970 790,965 800,950 818,950 828,970 815,1000 803,1030 785,1035 765,1047 750,1030 742,1010 745,982Z',
  SI: 'M705,1022 715,1025 735,1018 742,1015 742,1028 730,1040 728,1058 712,1058 705,1045Z',
  HR: 'M742,1028 765,1047 778,1050 778,1070 750,1065 735,1070 738,1085 755,1120 762,1150 745,1130 728,1110 718,1080 715,1060 728,1058 730,1040Z',
  PL: 'M716,740 740,725 765,705 775,712 778,722 800,725 828,725 838,745 843,790 835,805 843,850 843,870 828,900 825,935 810,925 790,920 775,912 760,890 740,880 735,870 723,858 718,830 720,800 714,775Z',
  EE: 'M838,512 868,493 898,500 892,540 892,585 880,578 865,565 850,568 845,550 838,540ZM815,550 822,543 832,540 830,560 818,565ZM820,525 828,518 832,530Z',
  LV: 'M850,568 865,565 880,578 892,590 898,650 880,665 860,650 850,640 820,638 806,650 806,615 822,580 830,590 835,608 848,610Z',
  LT: 'M806,650 820,638 850,640 860,650 880,668 875,700 865,720 855,742 838,745 828,725 828,705 810,695Z',
  RO: 'M828,970 855,972 880,960 890,985 900,1010 900,1055 918,1065 912,1090 905,1115 880,1105 855,1118 828,1110 820,1090 800,1050 795,1032 803,1030 815,1000Z',
  BG: 'M828,1110 855,1118 880,1105 905,1115 905,1140 898,1160 885,1185 850,1190 835,1180 830,1150Z',
  EL: 'M795,1230 810,1205 835,1190 860,1190 885,1182 888,1200 860,1208 850,1225 840,1220 842,1240 850,1260 855,1285 840,1285 825,1275 808,1265ZM806,1290 825,1288 838,1300 830,1312 832,1345 825,1335 820,1345 814,1322ZM838,1370 850,1380 875,1380 870,1390 845,1388ZM895,1345 900,1350 895,1362 892,1355ZM862,1340 866,1343 863,1348ZM870,1310 874,1313 871,1318ZM880,1325 884,1328 880,1332Z'
};

const nums = s => s.split(' ');
const mix = t => {
  const a = [237, 229, 215], b = [77, 0, 6];
  return `rgb(${a.map((v, i) => Math.round(v + (b[i] - v) * t)).join()})`;
};

function mapSvg(set, lo, hi) {
  const p = (d, c) => `<path class="${c}" d="${d}"/>`;
  const eu = Object.entries(shapes).map(([k, d]) => {
    const v = +nums(set[k])[23];
    return `<path class="eu" style="fill:${mix(Math.max(0, (v - lo) / (hi - lo)))}" d="${d}"/>`;
  }).join('');
  return `<svg viewBox="63 85 1229 1395" preserveAspectRatio="none" role="img" aria-label="Карта на Европа">${land.slice(0, 11).map(d => p(d, '')).join('')}${seas.map(d => p(d, 'sea')).join('')}${land.slice(11).map(d => p(d, '')).join('')}${lines.map(d => p(d, 'line')).join('')}${eu}</svg>`;
}

function tableHtml(id, set) {
  const years = Array.from({ length: 24 }, (_, i) => 2000 + i);
  const cols = '<col class="c0">' + years.map(y => `<col class="${y < 2013 ? 'c1' : 'c2'}">`).join('');
  const rows = Object.keys(names).map(k =>
    `<tr${k === 'BG' ? ' class="bg"' : ''}><th scope="row">${names[k]}</th>${nums(set[k]).map(v => `<td>${v}</td>`).join('')}</tr>`).join('');
  return `<table class="t-${id}"><colgroup>${cols}</colgroup>
    <thead><tr><th class="geo-h" rowspan="2">Географска единица</th><th class="period" colspan="24">Период от време</th></tr>
    <tr>${years.map(y => `<th scope="col">${y}</th>`).join('')}</tr></thead><tbody>${rows}</tbody>
    <tfoot><tr><td colspan="25">База данни на Евростат: <a class="link" href="#">Брутен държавен дълг</a><br>: = Липсват данни/ няма налични данни<br>Последно извличане - 30.01.2025 12:03</td></tr></tfoot></table>`;
}

document.querySelectorAll('.stat').forEach(el => {
  const id = el.dataset.set;
  const set = id === 'eur' ? eur : gdp;
  const [lo, hi, loT, hiT] = id === 'eur' ? [7707.7, 13895588.5, '7,707.7', '13,895,588.5'] : [20.2, 163.9, '20.2', '163.9'];
  const meta = `<strong>БРУТЕН ДЪРЖАВЕН ДЪЛГ</strong><br>${el.dataset.unit}<br>Държавно управление<br>Държавен консолидиран брутен дълг`;
  const r = (t, c) => `<label><input type="radio" name="geo-${id}"${c ? ' checked' : ''}>${t}</label>`;
  el.innerHTML = `<p class="lead">Географско представяне на данните за</p>
    <p class="meta">${meta}</p>
    <div class="geo"><div>
      <select aria-label="Период"><option>Период от време - 2023</option></select>
      <ul><li>${r('Светът')}<ul><li>${r('Европа', 1)}<ul><li>${r('Северна Европа')}</li><li>${r('Западна Европа')}</li><li>${r('Източна Европа')}</li><li>${r('Южна Европа')}</li></ul></li><li>${r('Западна Азия')}</li><li>${r('Северна Америка')}</li></ul></li></ul>
    </div><div class="map">${mapSvg(set, lo, hi)}<div class="legend"><span>${loT}</span><i></i><span>${hiT}</span></div></div></div>
    <p class="heads">${meta}</p>${tableHtml(id, set)}`;
});
```
